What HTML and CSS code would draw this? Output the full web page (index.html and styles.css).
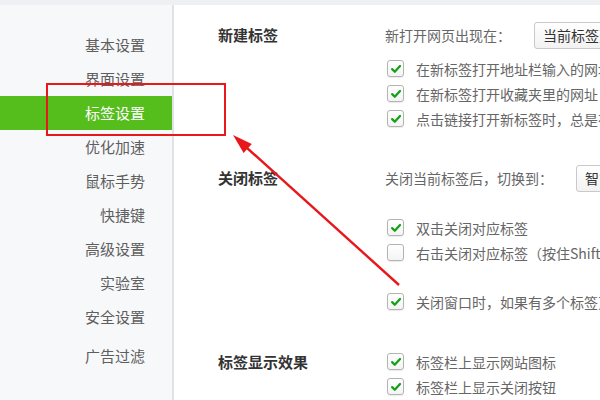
FILE: index.html
```html
<!DOCTYPE html>
<html lang="zh-CN">
<head>
<meta charset="utf-8">
<title>标签设置</title>
<link rel="stylesheet" href="styles.css">
</head>
<body>
<div class="top-strip"></div>
<div class="app">
  <nav class="sidebar">
    <div class="nav-item">基本设置</div>
    <div class="nav-item">界面设置</div>
    <div class="nav-item active">标签设置</div>
    <div class="nav-item">优化加速</div>
    <div class="nav-item">鼠标手势</div>
    <div class="nav-item">快捷键</div>
    <div class="nav-item">高级设置</div>
    <div class="nav-item">实验室</div>
    <div class="nav-item">安全设置</div>
    <div class="nav-item gap">广告过滤</div>
  </nav>
  <main class="main">
    <section class="section s1">
      <div class="section-title tall">新建标签</div>
      <div class="section-body">
        <div class="field-row">
          <span class="label">新打开网页出现在：</span>
          <span class="select">当前标签页</span>
        </div>
        <label class="check-row first">
          <span class="box on"><svg viewBox="0 0 16 16"><path d="M3.6 8.2 L6.6 11.2 L12.6 4.6"/></svg></span>
          <span class="text">在新标签打开地址栏输入的网址</span>
        </label>
        <label class="check-row">
          <span class="box on"><svg viewBox="0 0 16 16"><path d="M3.6 8.2 L6.6 11.2 L12.6 4.6"/></svg></span>
          <span class="text">在新标签打开收藏夹里的网址</span>
        </label>
        <label class="check-row">
          <span class="box on"><svg viewBox="0 0 16 16"><path d="M3.6 8.2 L6.6 11.2 L12.6 4.6"/></svg></span>
          <span class="text">点击链接打开新标签时，总是在后台打开</span>
        </label>
      </div>
    </section>
    <section class="section s2">
      <div class="section-title tall">关闭标签</div>
      <div class="section-body">
        <div class="field-row">
          <span class="label">关闭当前标签后，切换到：</span>
          <span class="select">智能选择</span>
        </div>
        <label class="check-row c2">
          <span class="box on"><svg viewBox="0 0 16 16"><path d="M3.6 8.2 L6.6 11.2 L12.6 4.6"/></svg></span>
          <span class="text">双击关闭对应标签</span>
        </label>
        <label class="check-row">
          <span class="box"></span>
          <span class="text">右击关闭对应标签（按住Shift键时弹出菜单）</span>
        </label>
        <label class="check-row c3">
          <span class="box on"><svg viewBox="0 0 16 16"><path d="M3.6 8.2 L6.6 11.2 L12.6 4.6"/></svg></span>
          <span class="text">关闭窗口时，如果有多个标签页则提示</span>
        </label>
      </div>
    </section>
    <section class="section s3">
      <div class="section-title">标签显示效果</div>
      <div class="section-body">
        <label class="check-row">
          <span class="box on"><svg viewBox="0 0 16 16"><path d="M3.6 8.2 L6.6 11.2 L12.6 4.6"/></svg></span>
          <span class="text">标签栏上显示网站图标</span>
        </label>
        <label class="check-row">
          <span class="box on"><svg viewBox="0 0 16 16"><path d="M3.6 8.2 L6.6 11.2 L12.6 4.6"/></svg></span>
          <span class="text">标签栏上显示关闭按钮</span>
        </label>
      </div>
    </section>
  </main>
</div>
<svg class="annotation" viewBox="0 0 600 400" width="600" height="400">
  <rect x="47" y="84" width="178" height="51" fill="none" stroke="#e8171c" stroke-width="2"/>
  <line x1="399" y1="285" x2="246" y2="147" stroke="#e8171c" stroke-width="2.4"/>
  <polygon points="233,135 243.6,152.9 251.8,144.1" fill="#e8171c"/>
</svg>
</body>
</html>
```

FILE: styles.css
```css
html, body {
  margin: 0;
  padding: 0;
}
body {
  width: 600px;
  height: 400px;
  overflow: hidden;
  position: relative;
  background: #ffffff;
  font-family: "Noto Sans CJK SC", "Noto Sans", sans-serif;
}
.top-strip {
  height: 5px;
  background: #eef0f3;
}
.app {
  display: flex;
  height: 395px;
}
.sidebar {
  width: 172px;
  flex: none;
  background: #f7f8fa;
  border-right: 2px solid #dfe2e6;
  padding-top: 23px;
}
.nav-item {
  height: 34px;
  line-height: 34px;
  text-align: right;
  padding-right: 27px;
  font-size: 15px;
  color: #5e5e5e;
  white-space: nowrap;
}
.nav-item.active {
  background: #55bd1c;
  color: #ffffff;
}
.nav-item.gap {
  margin-top: 5px;
}
.main {
  flex: 1;
  min-width: 0;
  padding-top: 16px;
  padding-left: 44px;
  overflow: hidden;
  white-space: nowrap;
}
.section {
  display: flex;
  align-items: flex-start;
}
.s2 {
  margin-top: 33px;
}
.s3 {
  margin-top: 35px;
}
.section-title {
  width: 167px;
  flex: none;
  font-size: 15px;
  font-weight: 700;
  color: #333333;
  height: 25px;
  line-height: 25px;
}
.section-title.tall {
  height: 28px;
  line-height: 28px;
}
.section-body {
  display: flex;
  flex-direction: column;
}
.field-row {
  height: 28px;
  display: flex;
  align-items: center;
}
.label {
  font-size: 14px;
  color: #666666;
}
.select {
  margin-left: 23px;
  height: 27px;
  line-height: 25px;
  padding: 0 8px;
  border: 1px solid #c9c9c9;
  border-radius: 3px;
  background: linear-gradient(#ffffff, #f2f2f2);
  font-size: 14px;
  color: #333333;
  box-sizing: border-box;
}
.check-row {
  height: 25px;
  display: flex;
  align-items: center;
}
.check-row.first {
  margin-top: 7px;
}
.check-row.c2 {
  margin-top: 23px;
}
.check-row.c3 {
  margin-top: 24px;
}
.box {
  width: 17px;
  height: 17px;
  margin-left: 2px;
  margin-right: 12px;
  border: 1px solid #b3b3b3;
  border-radius: 3px;
  background: linear-gradient(#ffffff, #f4f4f4);
  box-shadow: 0 1px 1px rgba(0, 0, 0, 0.08);
  box-sizing: border-box;
  flex: none;
  display: flex;
  align-items: center;
  justify-content: center;
}
.box svg {
  width: 14px;
  height: 14px;
}
.box svg path {
  fill: none;
  stroke: #16a01a;
  stroke-width: 2.6;
  stroke-linecap: round;
  stroke-linejoin: round;
}
.text {
  font-size: 14px;
  color: #666666;
}
.annotation {
  position: absolute;
  left: 0;
  top: 0;
  pointer-events: none;
}
```
